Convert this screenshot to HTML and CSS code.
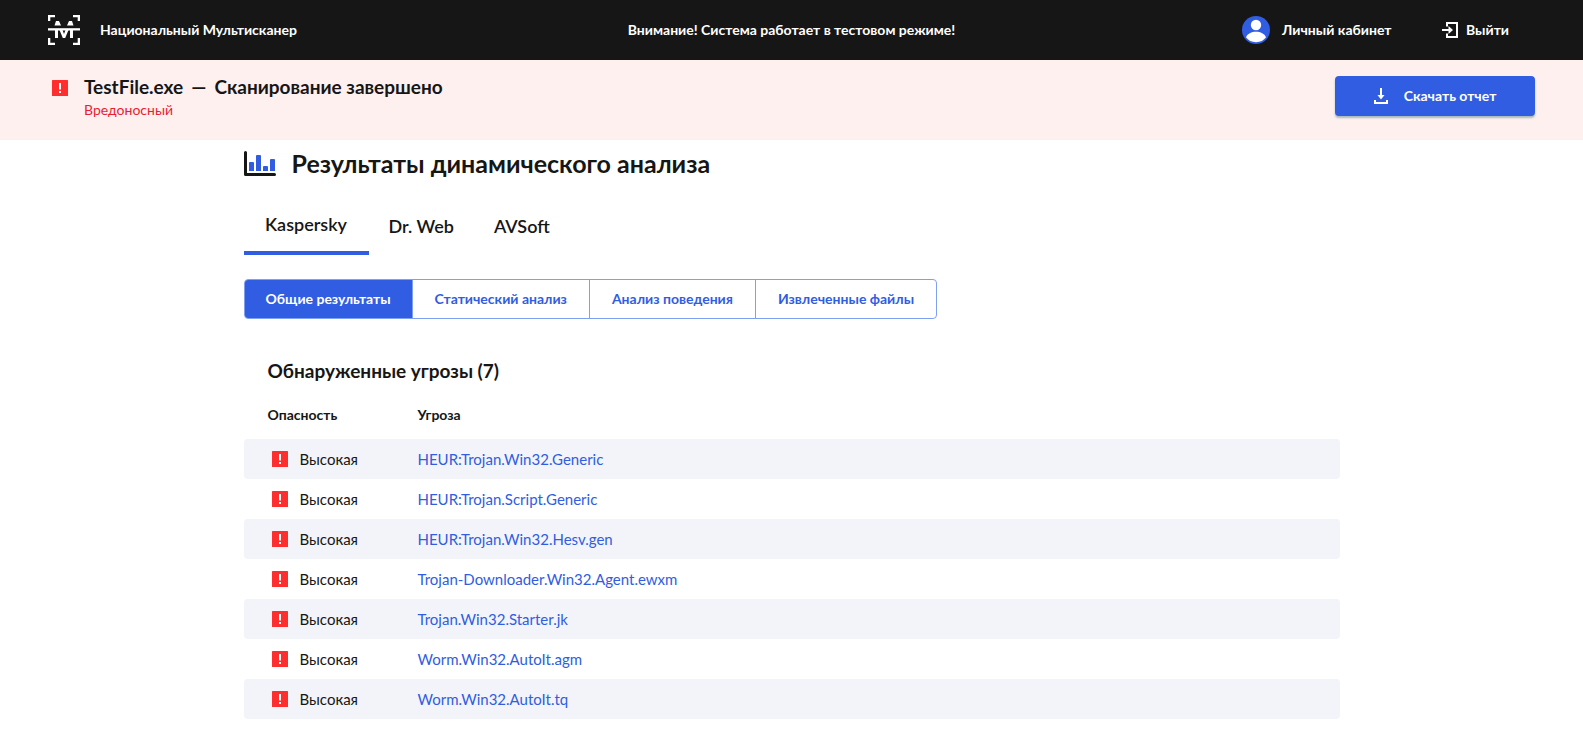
FILE: index.html
```html
<!DOCTYPE html>
<html lang="ru">
<head>
<meta charset="utf-8">
<title>Национальный Мультисканер</title>
<link rel="stylesheet" href="styles.css">
</head>
<body>
<svg class="sprite" aria-hidden="true">
  <symbol id="alert" viewBox="0 0 16 16">
    <rect width="16" height="16" rx="0.5" fill="#ff2e2e"/>
    <path d="M7 3h2v6.5H7zM7 11h2v2H7z" fill="#fff"/>
  </symbol>
</svg>
<header class="topbar">
  <a class="brand" href="#">
    <svg class="brand-logo" viewBox="0 0 32 30" aria-hidden="true" fill="#fff">
      <path d="M0 0h7v2.300H2.300V6H0zM25 0h7v6h-2.300V2.300H25zM0 23h2.300v4.700H7V30H0zM29.700 23H32v7h-7v-2.300h4.700z"/>
      <path d="M8 6h3l2 4.500H6.500zM24 6h-3l-2 4.500h6.500z"/>
      <path d="M0 13.200h32v2.300H0z"/>
      <path d="M7 15h3v8H7zM22 15h3v8h-3zM11.500 15h3l1.500 4 1.500-4h3l-3.300 8h-2.400z"/>
    </svg>
    <span>Национальный Мультисканер</span>
  </a>
  <p class="notice">Внимание! Система работает в тестовом режиме!</p>
  <nav class="account">
    <a class="account-link" href="#">
      <svg class="avatar" viewBox="0 0 28 28" aria-hidden="true">
        <circle cx="14" cy="14" r="14" fill="#305de2"/>
        <circle cx="14" cy="9" r="5.200" fill="#fff"/>
        <path d="M4 21.300C5.500 17.500 9.500 15.700 14 15.700s8.500 1.800 10 5.600C21.800 24.500 18.300 26.200 14 26.200S6.200 24.500 4 21.300z" fill="#fff"/>
      </svg>
      <span>Личный кабинет</span>
    </a>
    <a class="logout-link" href="#">
      <svg class="logout-icon" viewBox="0 0 16 16" aria-hidden="true" fill="none" stroke="#fff" stroke-width="2">
        <path d="M5 4.500V1h10v14H5v-3.500M0 8h9"/>
        <path d="M6.500 4l4.500 4-4.500 4z" fill="#fff" stroke="none"/>
      </svg>
      <span>Выйти</span>
    </a>
  </nav>
</header>
<section class="status">
  <svg class="alert-icon" aria-hidden="true"><use href="#alert"/></svg>
  <div class="status-text">
    <h1 class="status-title"><span>TestFile.exe</span><span>—</span><span>Сканирование завершено</span></h1>
    <p class="verdict">Вредоносный</p>
  </div>
  <button class="download" type="button">
    <svg class="download-icon" viewBox="0 0 14 16" aria-hidden="true" fill="none" stroke="#fff" stroke-width="2">
      <path d="M7 0v9M1 12v3h12v-3"/>
      <path d="M3.500 7h7L7 11.500z" fill="#fff" stroke="none"/>
    </svg>
    <span>Скачать отчет</span>
  </button>
</section>
<main class="report">
  <h2 class="report-title">
    <svg class="chart-icon" viewBox="0 0 32 25" aria-hidden="true">
      <path d="M1.500 1.500v22h29" fill="none" stroke="#161616" stroke-width="3" stroke-linecap="round" stroke-linejoin="round"/>
      <path d="M5 12q0-1 1-1h3q1 0 1 1v8H5zM12 5q0-1 1-1h3q1 0 1 1v15h-5zM19 16q0-1 1-1h3q1 0 1 1v4h-5zM26 9q0-1 1-1h3q1 0 1 1v11h-5z" fill="#305de2"/>
    </svg>
    <span>Результаты динамического анализа</span>
  </h2>
  <div class="engines" role="tablist">
    <button class="engine engine-active" type="button" role="tab" aria-selected="true">Kaspersky</button>
    <button class="engine" type="button" role="tab" aria-selected="false">Dr. Web</button>
    <button class="engine" type="button" role="tab" aria-selected="false">AVSoft</button>
  </div>
  <div class="views">
    <button class="view view-active" type="button">Общие результаты</button>
    <button class="view" type="button">Статический анализ</button>
    <button class="view" type="button">Анализ поведения</button>
    <button class="view" type="button">Извлеченные файлы</button>
  </div>
  <h3 class="threats-title">Обнаруженные угрозы (7)</h3>
  <table class="threats">
    <thead>
      <tr><th class="level-col" scope="col">Опасность</th><th scope="col">Угроза</th></tr>
    </thead>
    <tbody>
      <tr><td><span class="level"><svg class="alert-icon" aria-hidden="true"><use href="#alert"/></svg>Высокая</span></td><td><a href="#">HEUR:Trojan.Win32.Generic</a></td></tr>
      <tr><td><span class="level"><svg class="alert-icon" aria-hidden="true"><use href="#alert"/></svg>Высокая</span></td><td><a href="#">HEUR:Trojan.Script.Generic</a></td></tr>
      <tr><td><span class="level"><svg class="alert-icon" aria-hidden="true"><use href="#alert"/></svg>Высокая</span></td><td><a href="#">HEUR:Trojan.Win32.Hesv.gen</a></td></tr>
      <tr><td><span class="level"><svg class="alert-icon" aria-hidden="true"><use href="#alert"/></svg>Высокая</span></td><td><a href="#">Trojan-Downloader.Win32.Agent.ewxm</a></td></tr>
      <tr><td><span class="level"><svg class="alert-icon" aria-hidden="true"><use href="#alert"/></svg>Высокая</span></td><td><a href="#">Trojan.Win32.Starter.jk</a></td></tr>
      <tr><td><span class="level"><svg class="alert-icon" aria-hidden="true"><use href="#alert"/></svg>Высокая</span></td><td><a href="#">Worm.Win32.AutoIt.agm</a></td></tr>
      <tr><td><span class="level"><svg class="alert-icon" aria-hidden="true"><use href="#alert"/></svg>Высокая</span></td><td><a href="#">Worm.Win32.AutoIt.tq</a></td></tr>
    </tbody>
  </table>
</main>
</body>
</html>
```
FILE: styles.css
```css
* {
  box-sizing: border-box;
}

body {
  margin: 0;
  background: #fff;
  color: #161616;
  font-family: Lato, "Open Sans", sans-serif;
  font-size: 14px;
  line-height: 20px;
}

h1, h2, h3, p {
  margin: 0;
}

a {
  color: inherit;
  text-decoration: none;
}

button {
  border: 0;
  background: none;
  color: inherit;
  font: inherit;
  cursor: pointer;
}

.sprite {
  display: none;
}

.topbar {
  display: grid;
  grid-template-columns: 1fr auto 1fr;
  align-items: center;
  height: 60px;
  padding: 0 74px 0 48px;
  background: #161616;
  color: #fff;
  font-weight: 700;
}

.brand {
  display: flex;
  align-items: center;
  gap: 20px;
}

.brand-logo {
  width: 32px;
  height: 30px;
}

.notice {
  margin-left: 26px;
}

.account {
  display: flex;
  justify-content: flex-end;
  gap: 48px;
}

.account-link {
  display: flex;
  align-items: center;
  gap: 12px;
  min-width: 152px;
}

.logout-link {
  display: flex;
  align-items: center;
  gap: 8px;
}

.avatar {
  width: 28px;
  height: 28px;
}

.logout-icon {
  width: 16px;
  height: 16px;
}

.status {
  display: flex;
  align-items: flex-start;
  gap: 16px;
  min-height: 80px;
  padding: 16px 48px 16px 52px;
  background: #fdf0ef;
}

.alert-icon {
  flex: none;
  width: 16px;
  height: 16px;
}

.status > .alert-icon {
  margin-top: 4px;
}

.status-text {
  flex: 1;
}

.status-title {
  display: flex;
  gap: 8px;
  font-size: 19px;
  line-height: 22px;
}

.verdict {
  margin-top: 2px;
  color: #ec1c33;
}

.download {
  display: flex;
  align-items: center;
  justify-content: center;
  gap: 16px;
  width: 200px;
  height: 40px;
  border-radius: 4px;
  background: #305de2;
  box-shadow: 0 2px 2px #a9b9b9;
  color: #fff;
  font-weight: 700;
}

.download-icon {
  width: 14px;
  height: 16px;
}

.report {
  max-width: 1096px;
  margin: 0 auto;
  padding: 7px 0 36px;
}

.report-title {
  display: flex;
  align-items: center;
  gap: 16px;
  font-size: 25px;
  line-height: 32px;
}

.chart-icon {
  width: 32px;
  height: 25px;
}

.engines {
  display: flex;
  height: 48px;
  margin-top: 28px;
}

.engine {
  padding: 0 20px 10px;
  font-size: 18px;
  font-weight: 600;
}

.engine-active {
  min-width: 125px;
  border-bottom: 4px solid #305de2;
}

.views {
  display: flex;
  width: fit-content;
  height: 40px;
  margin-top: 24px;
  border: 1px solid #7ea0f2;
  border-radius: 4px;
  overflow: hidden;
}

.view {
  padding: 0 22px;
  color: #305de2;
  font-weight: 700;
}

.view + .view {
  border-left: 1px solid #7ea0f2;
}

.view-active {
  padding: 0 21px;
  background: #305de2;
  color: #fff;
}

.threats-title {
  margin-top: 40px;
  padding-left: 24px;
  font-size: 19px;
  line-height: 24px;
}

.threats {
  width: 100%;
  margin-top: 8px;
  border-collapse: separate;
  border-spacing: 0;
  table-layout: fixed;
}

.threats th,
.threats td {
  padding: 0;
  text-align: left;
}

.threats th {
  height: 48px;
}

.threats td {
  height: 40px;
  font-size: 15px;
}

.threats .level-col {
  width: 174px;
}

.threats th:first-child {
  padding-left: 24px;
}

.threats td:first-child {
  padding-left: 28px;
  border-radius: 4px 0 0 4px;
}

.threats td:last-child {
  border-radius: 0 4px 4px 0;
}

.threats tbody tr:nth-child(odd) td {
  background: #f3f4f9;
}

.threats a {
  color: #305de2;
}

.level {
  display: flex;
  align-items: center;
  gap: 12px;
}
```
